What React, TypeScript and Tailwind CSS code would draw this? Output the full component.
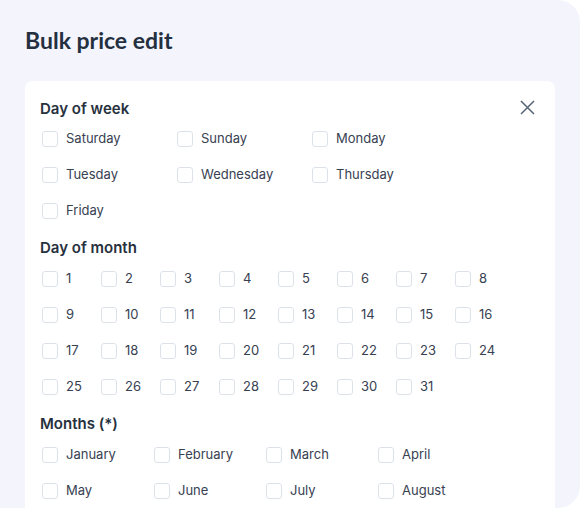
const weekDays = ["Saturday", "Sunday", "Monday", "Tuesday", "Wednesday", "Thursday", "Friday"];
const monthDays = Array.from({ length: 31 }, (_, i) => String(i + 1));
const months = ["January", "February", "March", "April", "May", "June", "July", "August"];

function CheckItem({ label }: { label: string }) {
  return (
    <label className="flex h-9 items-center gap-2 pl-[2px]">
      <span className="size-4 shrink-0 rounded-[3px] border border-[#dde2ea] bg-white" />
      <span className="text-[13px] text-[#374151]">{label}</span>
    </label>
  );
}

function Section({
  title,
  items,
  gridClass,
  className,
}: {
  title: string;
  items: string[];
  gridClass: string;
  className?: string;
}) {
  return (
    <div className={className}>
      <h3 className="h-5 text-[15px] leading-5 font-semibold text-[#27303d]">{title}</h3>
      <div className={gridClass}>
        {items.map((item) => (
          <CheckItem key={item} label={item} />
        ))}
      </div>
    </div>
  );
}

export default function App() {
  return (
    <div className="h-[508px] w-[580px] overflow-hidden bg-white" style={{ fontFamily: "Inter, sans-serif" }}>
      <div className="h-full rounded-r-[22px] bg-[#f4f4fd] pl-[25px] pr-[25px] pt-[27px]">
        <h1
          className="h-[26px] text-[23px] leading-[26px] font-bold text-[#243040]"
          style={{ fontFamily: "Lato, sans-serif" }}
        >
          Bulk price edit
        </h1>
        <div className="relative mt-[28px] h-[500px] rounded-lg bg-white px-[15px] pt-[18px]">
          <button className="absolute right-[20px] top-[19px] text-[#566477]">
            <svg width="15" height="15" viewBox="0 0 15 15" fill="none" stroke="currentColor" strokeWidth="1.5">
              <path d="M1 1L14 14M14 1L1 14" />
            </svg>
          </button>
          <Section
            title="Day of week"
            items={weekDays}
            gridClass="mt-[2px] grid grid-cols-[135px_135px_135px]"
          />
          <Section
            title="Day of month"
            items={monthDays}
            gridClass="mt-[3px] grid grid-cols-[59px_59px_59px_59px_59px_59px_59px_59px]"
            className="mt-[9px]"
          />
          <Section
            title="Months (*)"
            items={months}
            gridClass="mt-[3px] grid grid-cols-[112px_112px_112px_112px]"
            className="mt-[9px]"
          />
        </div>
      </div>
    </div>
  );
}
